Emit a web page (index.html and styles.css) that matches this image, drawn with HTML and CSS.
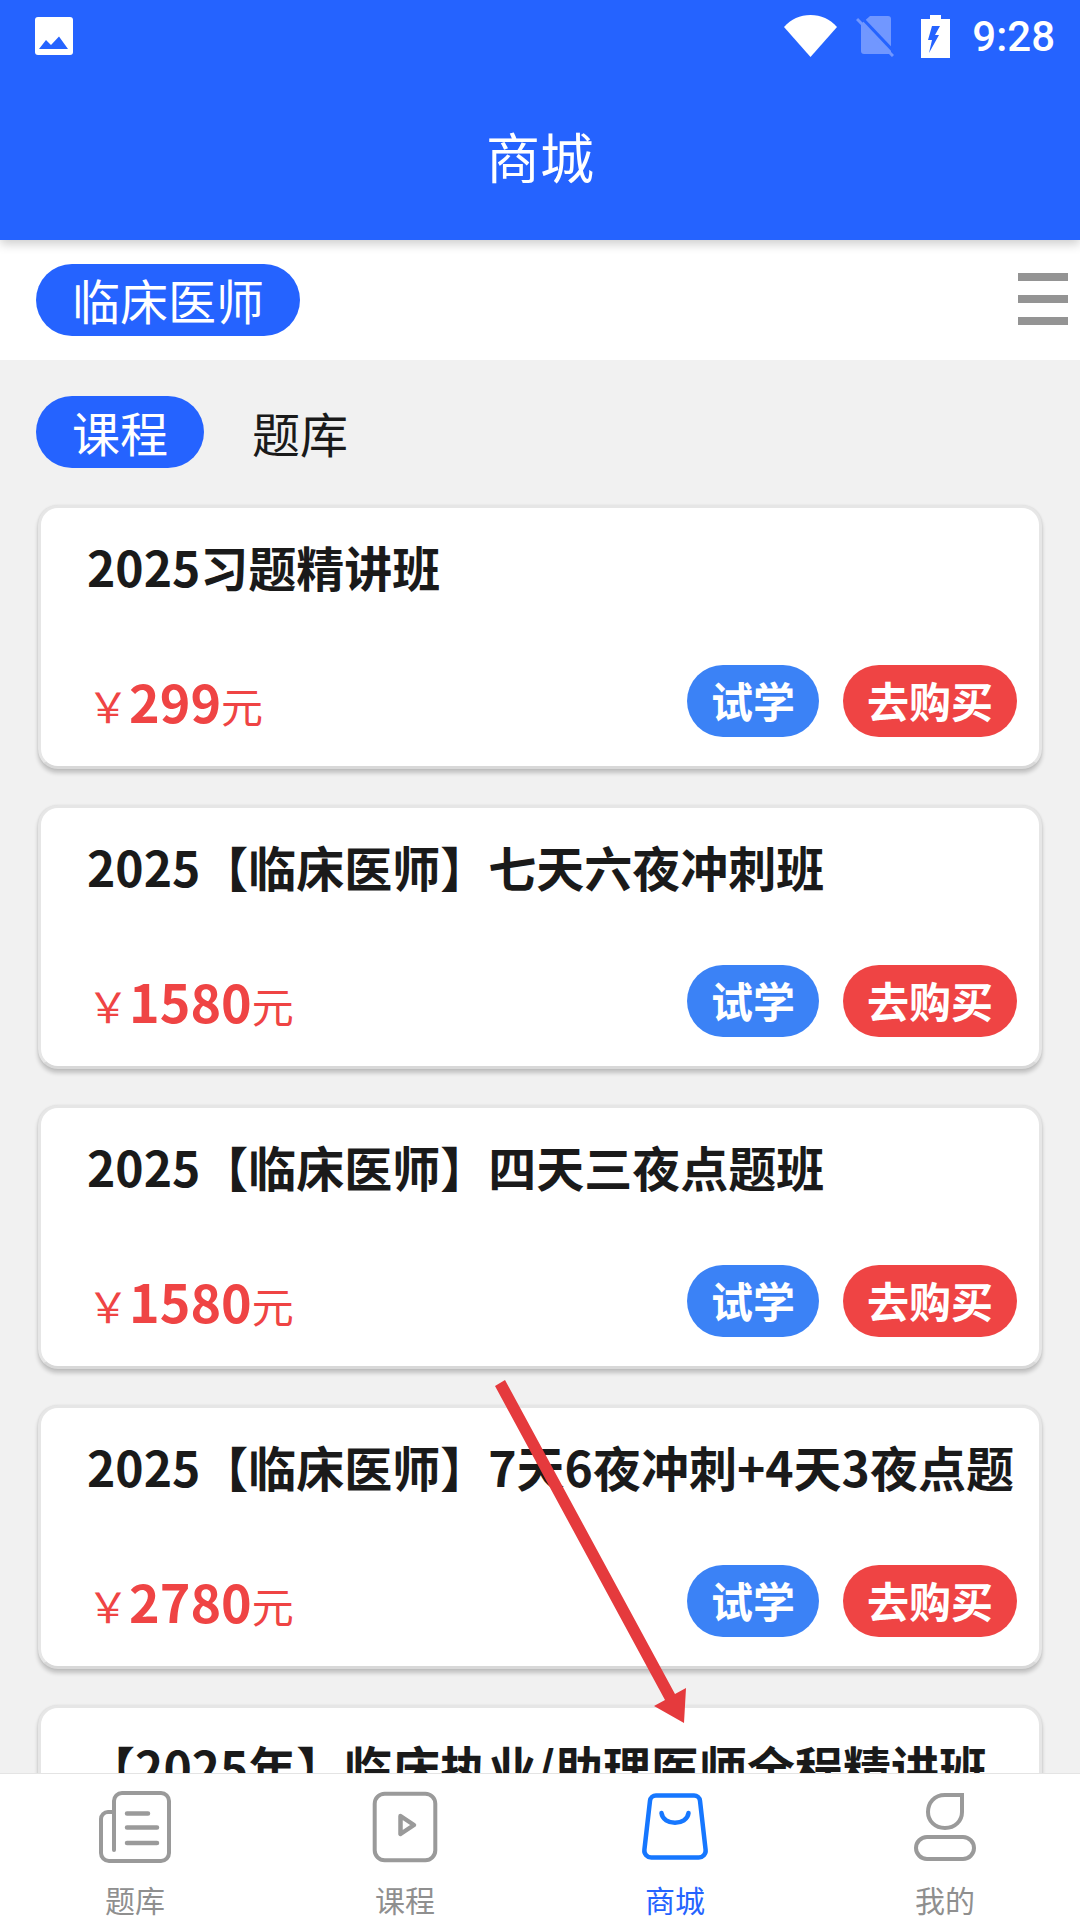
FILE: index.html
```html
<!DOCTYPE html>
<html lang="zh-CN">
<head>
  <meta charset="UTF-8" />
  <meta name="viewport" content="width=device-width, initial-scale=1.0"/>
  <title>商城</title>
  <link rel="stylesheet" href="styles.css">
</head>
<body>
  <div class="app">
    <header class="top">
      <div class="status">
        <svg class="pic" viewBox="0 0 38 38"><rect fill="#fff" width="38" height="38" rx="3"/><path fill="#2563ff" d="M4 32l7-9 5 5 8-8.500 9 12.500z"/></svg>
        <div class="status-right">
          <svg class="wifi" viewBox="0 0 53 42"><path fill="#fff" d="M0 12C7 4 16 0 26.500 0S46 4 53 12L26.500 42z"/></svg>
          <svg class="sim" viewBox="0 0 38 41"><path fill="#7197ff" d="M14 0h18a3 3 0 0 1 3 3v35H8a3 3 0 0 1-3-3V8z"/><path stroke="#2563ff" stroke-width="3" d="M3 3l37 39" transform="translate(2 -2)"/><path stroke="#7197ff" stroke-width="3" d="M1 3l36 37"/></svg>
          <svg class="batt" viewBox="0 0 29 43"><path fill="#fff" d="M9 0h11v4h9v39H0V4h9z"/><path fill="#2563ff" d="M11 11h8l-5 9h4L8 38l3-13H7z"/></svg>
          <span class="time">9:28</span>
        </div>
      </div>
      <h1 class="page-title">商城</h1>
    </header>

    <div class="filter">
      <span class="pill">临床医师</span>
      <div class="burger"><i></i><i></i><i></i></div>
    </div>

    <main class="content">
      <div class="tabs">
        <span class="pill">课程</span>
        <span class="tab">题库</span>
      </div>

      <div class="card">
        <div class="card-title">2025习题精讲班</div>
        <div class="card-foot">
          <div class="price"><span class="yen">￥</span><b>299</b><span class="unit">元</span></div>
          <div class="btns"><span class="btn blue">试学</span><span class="btn red">去购买</span></div>
        </div>
      </div>
      <div class="card">
        <div class="card-title">2025【临床医师】七天六夜冲刺班</div>
        <div class="card-foot">
          <div class="price"><span class="yen">￥</span><b>1580</b><span class="unit">元</span></div>
          <div class="btns"><span class="btn blue">试学</span><span class="btn red">去购买</span></div>
        </div>
      </div>
      <div class="card">
        <div class="card-title">2025【临床医师】四天三夜点题班</div>
        <div class="card-foot">
          <div class="price"><span class="yen">￥</span><b>1580</b><span class="unit">元</span></div>
          <div class="btns"><span class="btn blue">试学</span><span class="btn red">去购买</span></div>
        </div>
      </div>
      <div class="card">
        <div class="card-title">2025【临床医师】7天6夜冲刺+4天3夜点题</div>
        <div class="card-foot">
          <div class="price"><span class="yen">￥</span><b>2780</b><span class="unit">元</span></div>
          <div class="btns"><span class="btn blue">试学</span><span class="btn red">去购买</span></div>
        </div>
      </div>
      <div class="card">
        <div class="card-title center">【2025年】临床执业/助理医师全程精讲班</div>
      </div>
    </main>

    <nav class="nav">
      <div class="nav-item">
        <svg viewBox="0 0 76 76" fill="none" stroke="#9a9a9a" stroke-width="4" stroke-linecap="round"><path d="M17 60V11a8 8 0 0 1 8-8h39a8 8 0 0 1 8 8v52a8 8 0 0 1-8 8H12a8 8 0 0 1-8-8V29a7 7 0 0 1 7-7h6"/><path stroke-width="4.500" d="M30 23.500h21M30 37.500h30M30 53h30"/></svg>
        <span>题库</span>
      </div>
      <div class="nav-item">
        <svg viewBox="0 0 76 76" fill="none" stroke="#9a9a9a" stroke-width="4"><rect x="7.700" y="3.700" width="60.600" height="66.600" rx="10"/><path stroke-width="4.500" stroke-linejoin="round" d="M33.500 26L47 35l-13.500 9z"/></svg>
        <span>课程</span>
      </div>
      <div class="nav-item active">
        <svg viewBox="0 0 76 76" fill="none" stroke="#1677ff" stroke-width="4.500" stroke-linecap="round"><path d="M19 5.500h38a6 6 0 0 1 6 5.200l5.600 49a7 7 0 0 1-7 7.800H14.400a7 7 0 0 1-7-7.800l5.600-49a6 6 0 0 1 6-5.200z"/><path d="M24.500 23c1.500 13 25.500 13 27 0"/></svg>
        <span>商城</span>
      </div>
      <div class="nav-item">
        <svg viewBox="0 0 76 76" fill="none" stroke="#9a9a9a" stroke-width="4"><path d="M55 5H38C27 5 21 13 21 22c0 9 7 16 17 16s17-7 17-16z"/><rect x="9" y="47" width="58" height="22" rx="11"/></svg>
        <span>我的</span>
      </div>
    </nav>

    <svg class="arrow" viewBox="0 0 1080 1920"><path fill="#e53a3d" d="M495 1386l10-6 170 314 11-6-2 35-30-17 11-6z"/></svg>
  </div>
</body>
</html>
```

FILE: styles.css
```css
:root {
  --blue: #2563ff;
  --btn-blue: #3b82f6;
  --red: #ef4444;
  --bg: #f1f1f1;
  --text: #1a1a1a;
  --gray: #8f8f8f;
}

* {
  box-sizing: border-box;
}

html, body {
  margin: 0;
  height: 1920px;
  overflow: hidden;
}

body {
  font-family: "Noto Sans CJK SC", "Noto Sans", sans-serif;
  background-color: var(--bg);
  color: var(--text);
}

.app {
  position: relative;
  display: flex;
  flex-direction: column;
  width: 1080px;
  height: 1920px;
  overflow: hidden;
}

.top {
  position: relative;
  z-index: 2;
  flex: none;
  height: 240px;
  background-color: var(--blue);
  color: #fff;
  box-shadow: 0 4px 10px rgba(0, 0, 0, 0.2);
}

.status {
  display: flex;
  justify-content: space-between;
  align-items: center;
  height: 72px;
  padding: 0 25px 0 35px;
}

.pic {
  width: 38px;
  height: 38px;
}

.status-right {
  display: flex;
  align-items: center;
}

.wifi {
  width: 53px;
  height: 42px;
  margin-right: 19px;
}

.sim {
  width: 38px;
  height: 41px;
  margin-right: 27px;
}

.batt {
  width: 29px;
  height: 43px;
  margin-right: 22px;
}

.time {
  font-family: Roboto, sans-serif;
  font-size: 42px;
  font-weight: 500;
}

.page-title {
  margin: 0;
  height: 168px;
  padding-top: 44px;
  font-size: 54px;
  line-height: 80px;
  font-weight: 400;
  text-align: center;
}

.filter {
  flex: none;
  display: flex;
  justify-content: space-between;
  align-items: center;
  height: 120px;
  padding: 0 12px 0 36px;
  background-color: #fff;
}

.pill {
  display: inline-block;
  height: 72px;
  padding: 0 36px;
  border-radius: 36px;
  background-color: var(--blue);
  color: #fff;
  font-size: 48px;
  line-height: 70px;
}

.burger {
  display: flex;
  flex-direction: column;
  gap: 14px;
  width: 50px;
  margin-bottom: 2px;
}

.burger i {
  display: block;
  height: 8px;
  background-color: #949494;
}

.content {
  flex: 1;
  min-height: 0;
  overflow: hidden;
  padding: 36px 38px 0 36px;
}

.tabs {
  display: flex;
  align-items: center;
  gap: 48px;
  height: 72px;
  margin-bottom: 37px;
}

.tab {
  font-size: 48px;
  line-height: 69px;
}

.card {
  height: 264px;
  margin: 0 0 36px 2px;
  padding: 22px 22px 29px 46px;
  display: flex;
  flex-direction: column;
  justify-content: space-between;
  background-color: #fff;
  border: 3px solid #e6e6e6;
  border-bottom-color: #d8d8d8;
  border-radius: 20px;
  box-shadow: 0 4px 4px rgba(0, 0, 0, 0.2), 0 0 2px rgba(0, 0, 0, 0.1);
}

.card-title {
  font-size: 48px;
  line-height: 72px;
  font-weight: 700;
  white-space: nowrap;
}

.card-title.center {
  text-align: center;
  padding-right: 30px;
}

.card-foot {
  display: flex;
  justify-content: space-between;
  align-items: center;
  height: 72px;
}

.price {
  color: var(--red);
  font-size: 42px;
  line-height: 72px;
  padding-top: 4px;
}

.price b {
  font-size: 52px;
  font-weight: 700;
}

.btns {
  display: flex;
  gap: 24px;
}

.btn {
  height: 72px;
  padding: 0 24px;
  border-radius: 36px;
  color: #fff;
  font-size: 42px;
  line-height: 70px;
  font-weight: 700;
}

.btn.blue {
  background-color: var(--btn-blue);
}

.btn.red {
  background-color: var(--red);
}

.nav {
  position: relative;
  z-index: 2;
  flex: none;
  display: grid;
  grid-template-columns: repeat(4, 270px);
  height: 147px;
  background-color: #fff;
  border-top: 1px solid #e4e4e4;
}

.nav-item {
  display: flex;
  flex-direction: column;
  align-items: center;
  padding-top: 16px;
  color: var(--gray);
  font-size: 30px;
}

.nav-item svg {
  width: 76px;
  height: 76px;
}

.nav-item span {
  line-height: 42px;
  margin-top: 12px;
}

.nav-item.active {
  color: var(--blue);
}

.arrow {
  position: absolute;
  left: 0;
  top: 0;
  z-index: 3;
  width: 1080px;
  height: 1920px;
  pointer-events: none;
}
```
